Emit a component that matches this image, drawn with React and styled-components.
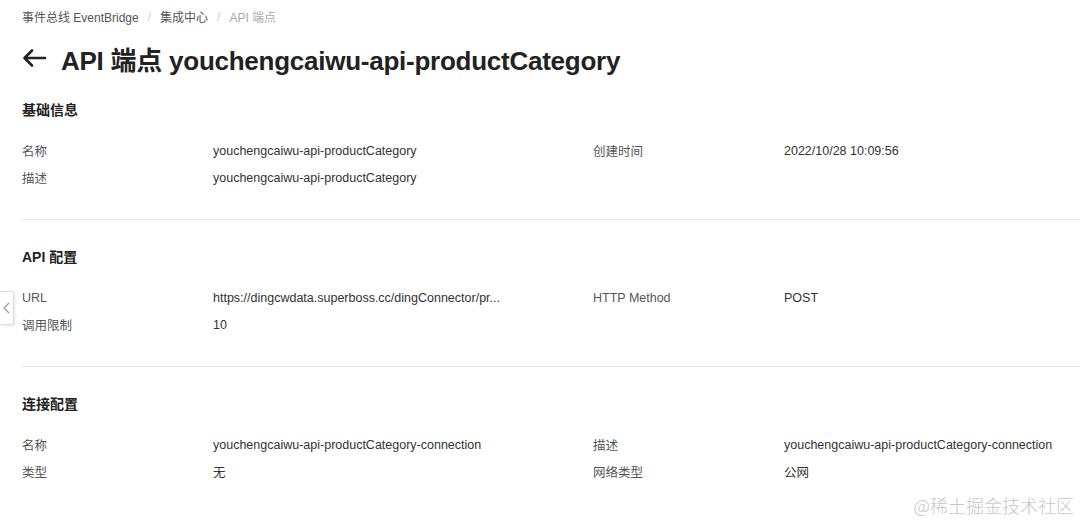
import React from 'react'
import styled, { createGlobalStyle } from 'styled-components'

const GlobalStyle = createGlobalStyle`
    body {
        margin: 0;
        background: #fff;
        font-family: "Liberation Sans", "Noto Sans CJK SC", sans-serif;
        color: #333;
    }
`

const Page = styled.div`
    position: relative;
    width: 1080px;
    height: 524px;
    overflow: hidden;
    padding-left: 22px;
    box-sizing: border-box;
`

const Crumbs = styled.nav`
    display: flex;
    align-items: center;
    gap: 9px;
    height: 33px;
    font-size: 12px;
    color: #555;

    .sep {
        color: #ccc;
    }
    .current {
        color: #aaa;
    }
`

const Heading = styled.h1`
    display: flex;
    align-items: center;
    gap: 14px;
    margin: 8px 0 0;
    height: 34px;
    font-size: 26px;
    font-weight: 700;
    color: #222;
    letter-spacing: -0.25px;
`

const Section = styled.section`
    padding: 27px 0 28px;
    border-bottom: 1px solid ${p => (p.$last ? 'transparent' : '#e8e8e8')};

    &:first-of-type {
        padding-top: 25px;
    }
`

const SectionTitle = styled.h2`
    margin: 0 0 17px;
    height: 20px;
    line-height: 20px;
    font-size: 14px;
    font-weight: 700;
    color: #222;
`

const Grid = styled.div`
    display: grid;
    grid-template-columns: 191px 380px 191px 1fr;
    grid-auto-rows: 27px;
    align-items: center;
    font-size: 12.5px;
`

const Label = styled.div`
    color: #555;
`

const Value = styled.div`
    color: #333;
    white-space: nowrap;
`

const SideTab = styled.div`
    position: absolute;
    left: 0;
    top: 291px;
    width: 13px;
    height: 32px;
    border: 1px solid #ddd;
    border-left: none;
    border-radius: 0 3px 3px 0;
    background: #fff;
    box-shadow: 1px 1px 3px rgba(0, 0, 0, 0.1);
    display: flex;
    align-items: center;
    justify-content: center;
`

const Watermark = styled.div`
    position: absolute;
    right: 6px;
    bottom: 6px;
    font-family: "Noto Sans CJK SC", serif;
    font-size: 18px;
    font-weight: 300;
    color: #c8c8c8;
`

const sections = [
    {
        title: '基础信息',
        rows: [
            ['名称', 'youchengcaiwu-api-productCategory', '创建时间', '2022/10/28 10:09:56'],
            ['描述', 'youchengcaiwu-api-productCategory'],
        ],
    },
    {
        title: 'API 配置',
        rows: [
            ['URL', 'https://dingcwdata.superboss.cc/dingConnector/pr...', 'HTTP Method', 'POST'],
            ['调用限制', '10'],
        ],
    },
    {
        title: '连接配置',
        rows: [
            ['名称', 'youchengcaiwu-api-productCategory-connection', '描述', 'youchengcaiwu-api-productCategory-connection'],
            ['类型', '无', '网络类型', '公网'],
        ],
    },
]

const App = () => {
    return (
        <Page>
            <GlobalStyle />
            <Crumbs>
                <span>事件总线 EventBridge</span>
                <span className="sep">/</span>
                <span>集成中心</span>
                <span className="sep">/</span>
                <span className="current">API 端点</span>
            </Crumbs>
            <Heading>
                <svg width="25" height="20" viewBox="0 0 25 20" fill="none" stroke="#222" strokeWidth="2.6" strokeLinecap="round" strokeLinejoin="round">
                    <path d="M23 10H3M10 2.5L2.5 10L10 17.5" />
                </svg>
                API 端点 youchengcaiwu-api-productCategory
            </Heading>
            {sections.map((s, i) => (
                <Section key={s.title} $last={i === sections.length - 1}>
                    <SectionTitle>{s.title}</SectionTitle>
                    <Grid>
                        {s.rows.map((r) => (
                            <React.Fragment key={r[0]}>
                                <Label>{r[0]}</Label>
                                <Value>{r[1]}</Value>
                                <Label>{r[2] || ''}</Label>
                                <Value>{r[3] || ''}</Value>
                            </React.Fragment>
                        ))}
                    </Grid>
                </Section>
            ))}
            <SideTab>
                <svg width="7" height="12" viewBox="0 0 7 12" fill="none" stroke="#999" strokeWidth="1.2">
                    <path d="M6 1L1 6L6 11" />
                </svg>
            </SideTab>
            <Watermark>@稀土掘金技术社区</Watermark>
        </Page>
    )
}

export default App
